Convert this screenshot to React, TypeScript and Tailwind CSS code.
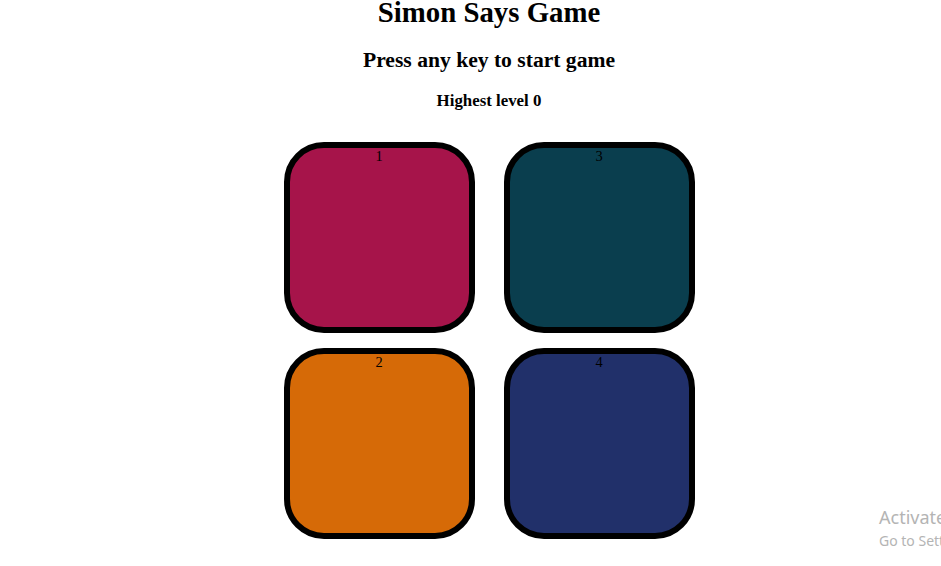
import React from 'react';

// Simon board colours, in grid order (column-wise: 1,2 left, 3,4 right)
const boxes = [
  { id: 1, color: 'bg-[#a6144a]' },
  { id: 3, color: 'bg-[#0a3e4e]' },
  { id: 2, color: 'bg-[#d66a07]' },
  { id: 4, color: 'bg-[#21306a]' },
];

const App = () => {
  return (
    <div className="relative w-[941px] h-[566px] overflow-hidden bg-white text-black font-['Liberation_Serif',serif]">
      <div className="flex flex-col items-center pl-[37px] text-center">
        <h1 className="text-[28.8px] font-bold leading-[33px] -mt-[4px]">Simon Says Game</h1>
        <h2 className="text-[21.6px] font-bold leading-[25px] mt-[19px]">Press any key to start game</h2>
        <h3 className="text-[16.85px] font-bold leading-[19px] mt-[18px]">Highest level 0</h3>

        <div className="grid grid-cols-2 gap-x-[29px] gap-y-[15px] mt-[32px]">
          {boxes.map((b) => (
            <div
              key={b.id}
              className={`w-[191px] h-[191px] rounded-[40px] border-[6px] border-black ${b.color} text-[14.4px] leading-[16px]`}
            >
              {b.id}
            </div>
          ))}
        </div>
      </div>

      {/* windows activation watermark */}
      <div className="absolute left-[879px] top-[505px] whitespace-nowrap font-['Noto_Sans',sans-serif] text-[#b4b4b4]">
        <div className="text-[18px] leading-[24px]">Activate Windows</div>
        <div className="text-[14px] leading-[18px] mt-[3px]">Go to Settings to activate Windows.</div>
      </div>
    </div>
  );
};

export default App;
